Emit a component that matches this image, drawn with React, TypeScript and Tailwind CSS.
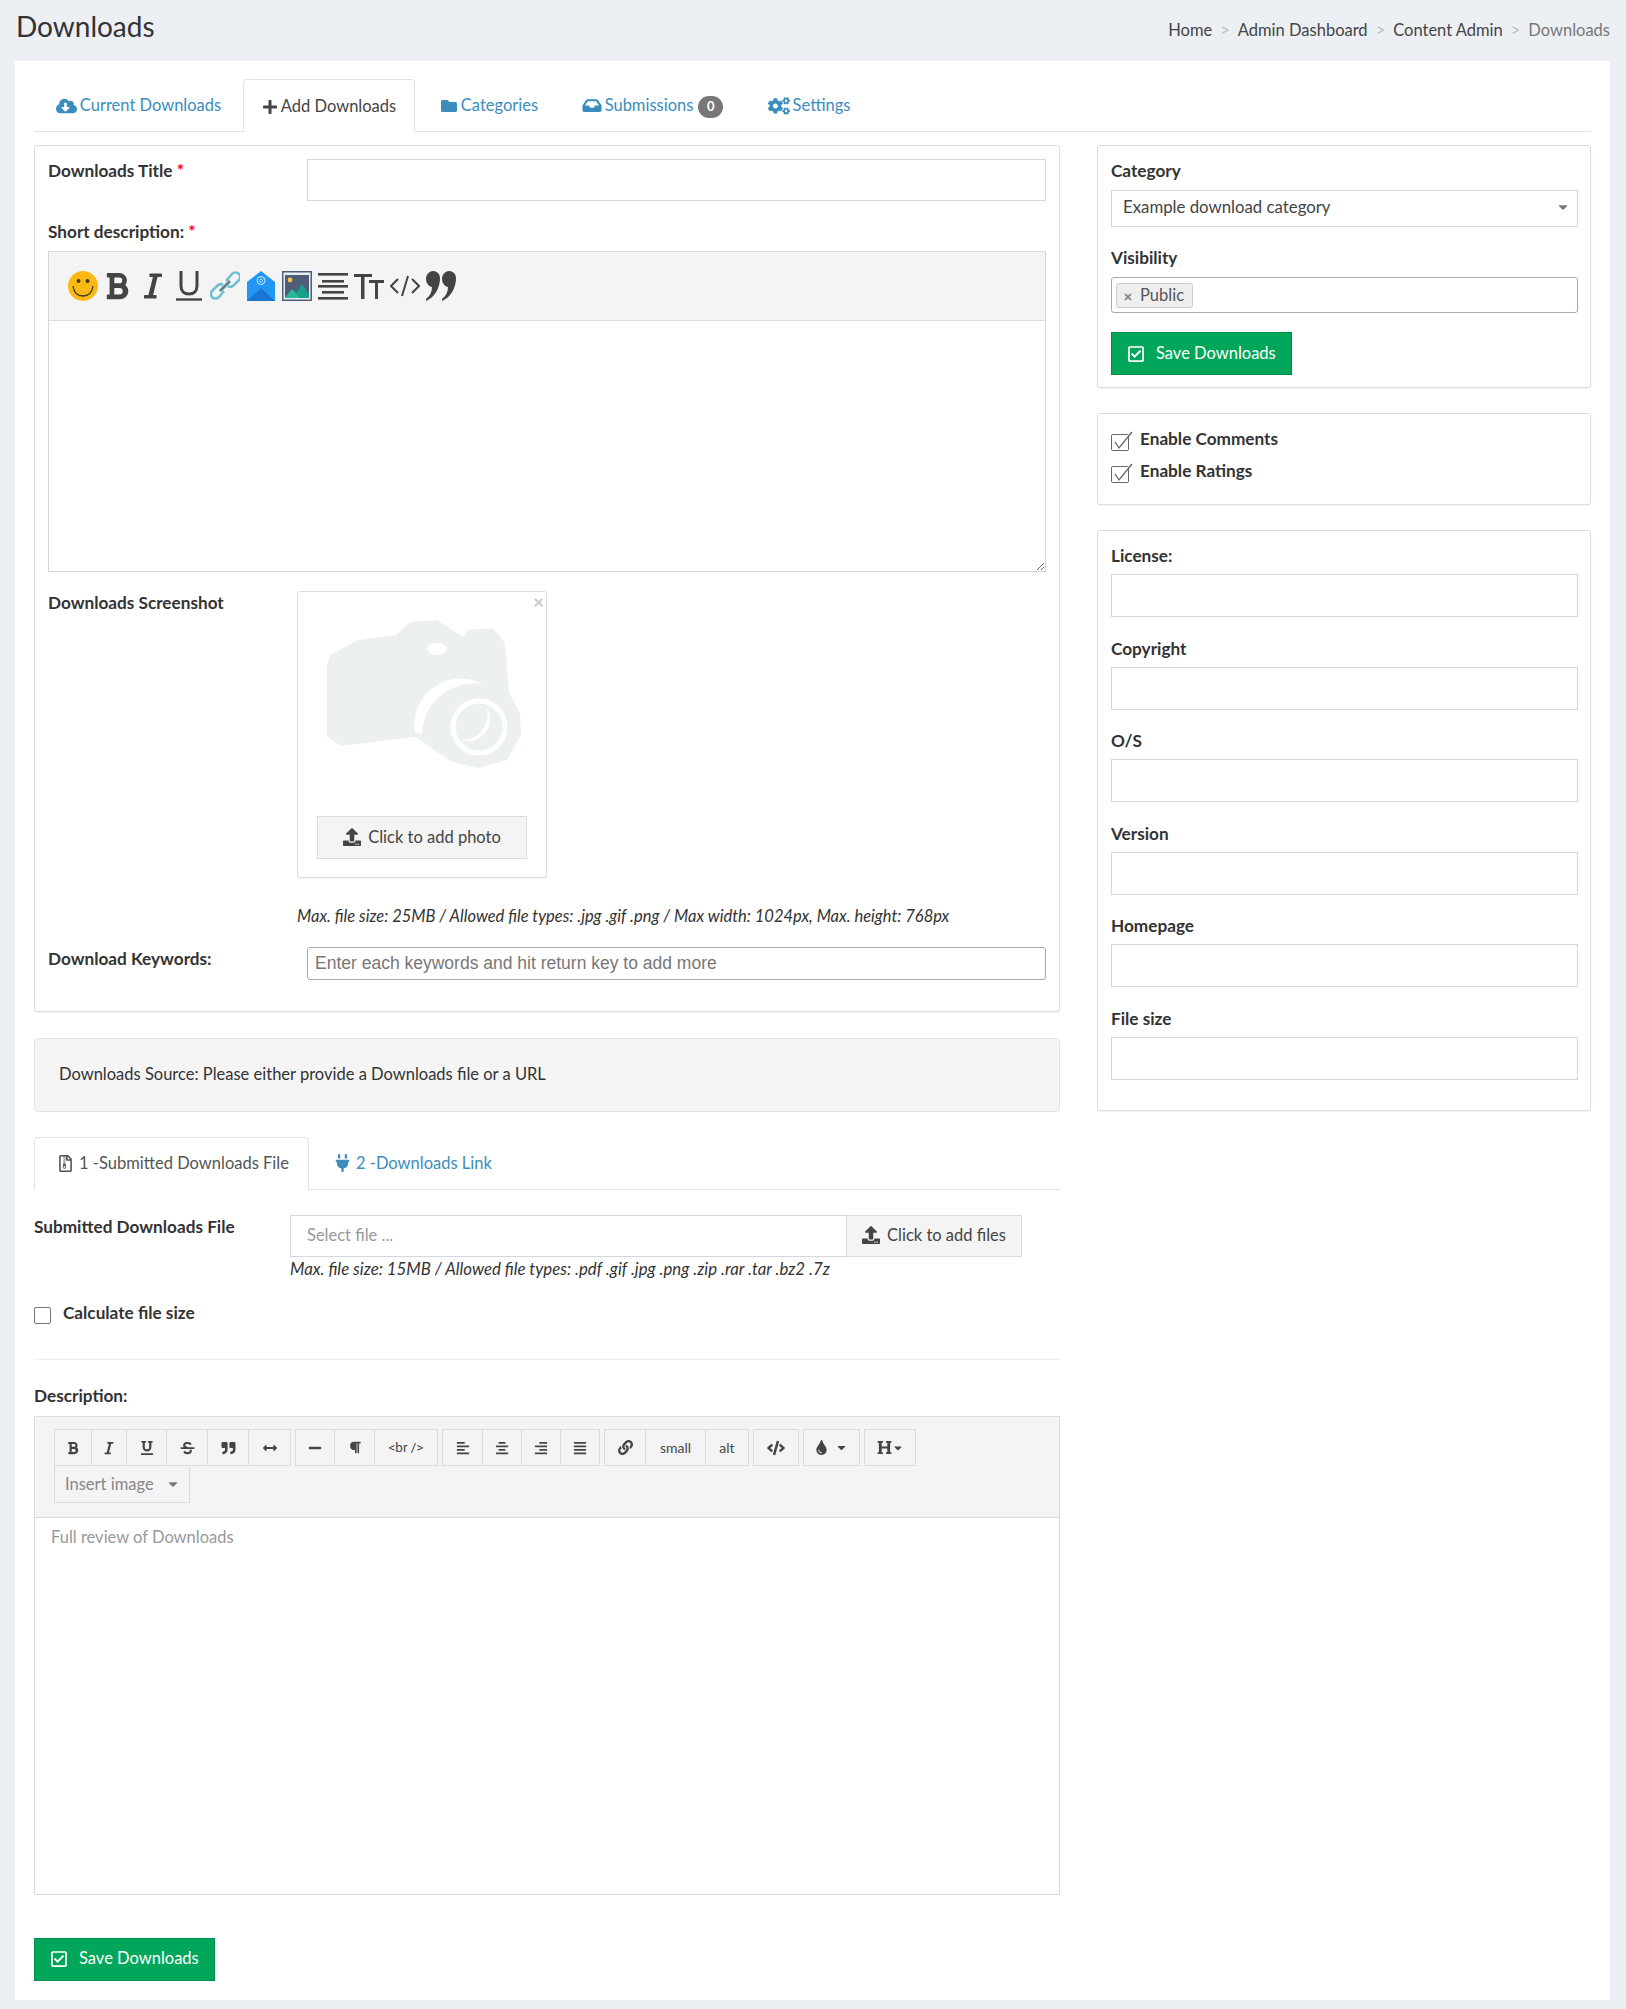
import type { ReactNode } from "react";
import {
  FaAlignCenter,
  FaAlignJustify,
  FaAlignLeft,
  FaAlignRight,
  FaArrowsAltH,
  FaBold,
  FaCaretDown,
  FaCloudDownloadAlt,
  FaCode,
  FaCogs,
  FaFolder,
  FaHeading,
  FaInbox,
  FaItalic,
  FaLink,
  FaMinus,
  FaParagraph,
  FaPlug,
  FaPlus,
  FaQuoteRight,
  FaRegCheckSquare,
  FaRegFileArchive,
  FaStrikethrough,
  FaTimes,
  FaTint,
  FaUnderline,
  FaUpload,
} from "react-icons/fa";

const panel = "border border-[#d9dde4] rounded-[3px] shadow-[0_1px_1px_rgba(0,0,0,0.05)] bg-white";
const field = "block border border-[#d2d6de] bg-white outline-none";
const tool = "flex items-center justify-center border border-[#dcdcdc] -ml-px first:ml-0 h-[37px] text-[#444]";

function Smiley() {
  return (
    <svg width="30" height="30" viewBox="0 0 30 30">
      <circle cx="15" cy="15" r="15" fill="#fdb913" />
      <circle cx="10.5" cy="10" r="2" fill="#3f3a2c" />
      <circle cx="19.5" cy="10" r="2" fill="#3f3a2c" />
      <path d="M5 15c1 7 5 10 10 10s9-3 10-10" fill="none" stroke="#3f3a2c" strokeWidth="1.3" />
    </svg>
  );
}

function ThinUnderline() {
  return (
    <svg width="26" height="30" viewBox="0 0 26 30" fill="none" stroke="#444">
      <path d="M5 0v15c0 5 3 8 8 8s8-3 8-8V0" strokeWidth="3" />
      <path d="M0 28.5h26" strokeWidth="2.4" />
    </svg>
  );
}

function ChainLink() {
  return (
    <svg width="30" height="30" viewBox="0 0 30 30" fill="none">
      <path d="M14 20l-5 6c-2 2-5 2-7 0s-1-5 0-6l6-6c2-1 4-1 5 0" stroke="#72c0d4" strokeWidth="2.6" />
      <path d="M16 10l6-7c2-2 5-2 7 0s1 5 0 6l-6 6c-2 1-4 1-5 0" stroke="#72c0d4" strokeWidth="2.6" />
      <path d="M10 20L20 10" stroke="#5f8792" strokeWidth="3" />
    </svg>
  );
}

function MailOpen() {
  return (
    <svg width="28" height="30" viewBox="0 0 28 30">
      <path d="M0 11L14 0l14 11v19H0z" fill="#2196f3" />
      <path d="M0 30L14 17l14 13z" fill="#1976d2" />
      <circle cx="14" cy="9.5" r="4" fill="none" stroke="#d5ecff" strokeWidth="1" />
      <circle cx="14" cy="9.5" r="1.5" fill="none" stroke="#d5ecff" strokeWidth="0.8" />
    </svg>
  );
}

function Picture() {
  return (
    <svg width="30" height="30" viewBox="0 0 30 30">
      <rect x="0" y="0" width="30" height="30" fill="#4f5d78" />
      <rect x="1.5" y="1.5" width="27" height="27" fill="#e8edf2" />
      <rect x="3" y="4" width="24" height="23" fill="#4f5d78" />
      <circle cx="8" cy="9" r="2.4" fill="#f5c542" />
      <path d="M3 27l7-9 4 4 6-9 7 10v4z" fill="#16a085" />
      <path d="M3 27l7-9 8 9z" fill="#26b99a" />
    </svg>
  );
}

function AlignBars() {
  return (
    <svg width="30" height="30" viewBox="0 0 30 30" fill="#444">
      <rect x="0" y="2" width="30" height="2.6" />
      <rect x="4" y="9" width="22" height="2.6" />
      <rect x="0" y="14" width="30" height="2.6" />
      <rect x="4" y="20" width="22" height="2.6" />
      <rect x="0" y="26" width="30" height="2.6" />
    </svg>
  );
}

function TextSize() {
  return (
    <svg width="30" height="30" viewBox="0 0 30 30" fill="#444">
      <rect x="0" y="3" width="18" height="3" />
      <rect x="7" y="3" width="3.5" height="25" />
      <rect x="15" y="9" width="15" height="3" />
      <rect x="21" y="9" width="3" height="19" />
    </svg>
  );
}

function ThinCode() {
  return (
    <svg width="30" height="22" viewBox="0 0 30 22" fill="none" stroke="#444" strokeWidth="2">
      <path d="M8 4L1 11l7 7M22 4l7 7-7 7M18 1l-6 20" />
    </svg>
  );
}

function CurlyQuote() {
  return (
    <svg width="30" height="30" viewBox="0 0 30 30" fill="#444">
      <path d="M7 0c4 0 7 3 7 7 0 10-5 19-14 23v-2c4-3 6-7 6-12C3 16 0 12 0 8s3-8 7-8z" />
      <path d="M23 0c4 0 7 3 7 7 0 10-5 19-14 23v-2c4-3 6-7 6-12-3 0-6-4-6-8s3-8 7-8z" />
    </svg>
  );
}

function Camera() {
  return (
    <svg width="194" height="148" viewBox="0 0 194 148">
      <path
        d="M0 47L3 35 31 20 69 15 83 2 110 0 136 17 141 10 166 8 178 23 182 73 193 93 194 115 180 140 152 148 125 142 88 117 14 126 0 117z"
        fill="#ecf0f1"
      />
      <path d="M88 112a46 46 0 0 1 67-48 52 52 0 0 0-60 50z" fill="#fff" />
      <ellipse cx="110" cy="29" rx="10" ry="6" fill="#fff" />
      <circle cx="152" cy="107" r="26" fill="none" stroke="#fff" strokeWidth="5" />
      <path d="M160 88a22 22 0 0 1-26 32 26 26 0 0 0 26-32z" fill="#fff" />
    </svg>
  );
}

function Tab({ icon, label, active, width, badge }: { icon: ReactNode; label: string; active?: boolean; width: string; badge?: string }) {
  return (
    <div
      className={
        width +
        " flex items-center justify-center gap-[3px] pt-[1px] " +
        (active
          ? "border border-b-0 border-[#dfe3ea] rounded-t-[4px] bg-white text-[#444] -mb-px h-[53px]"
          : "text-[#3c8dbc] h-[52px]")
      }
    >
      {icon}
      <span>{label}</span>
      {badge && (
        <span className="ml-[2px] mt-[2px] flex items-center justify-center w-[25px] h-[22px] rounded-full bg-[#777] text-white text-[13px] font-bold">
          {badge}
        </span>
      )}
    </div>
  );
}

function Label({ children, className = "" }: { children: ReactNode; className?: string }) {
  return <div className={"h-[22px] leading-[22px] font-bold text-[17.2px] text-[#333] whitespace-nowrap " + className}>{children}</div>;
}

function SaveButton({ className = "pb-[2px]" }: { className?: string }) {
  return (
    <div className={"flex items-center w-[181px] h-[43px] pl-[15px] bg-[#00a65a] border border-[#008d4c] text-white " + className}>
      <FaRegCheckSquare className="w-[18px] h-[18px] mr-[11px]" />
      Save Downloads
    </div>
  );
}

function SideField({ label, first }: { label: string; first?: boolean }) {
  return (
    <div className={first ? "" : "mt-[20.5px]"}>
      <Label>{label}</Label>
      <input type="text" className={field + " w-full h-[43px] mt-[7px]"} />
    </div>
  );
}

function CheckRow({ label }: { label: string }) {
  return (
    <div className="flex items-start h-[32px]">
      <svg width="22" height="20" viewBox="0 0 22 20" fill="none" className="mr-[7px] mt-[3px]">
        <rect x="0.5" y="3.5" width="17" height="16" rx="1" stroke="#666" />
        <path d="M4 11l4 6L21 1" stroke="#666" strokeWidth="1.3" />
      </svg>
      <span className="font-bold text-[17.2px] text-[#333] leading-[22px]">{label}</span>
    </div>
  );
}

function Caret() {
  return <FaCaretDown className="w-[14px] h-[14px] text-[#777]" />;
}

const toolGroups: { w: string; node: ReactNode }[][] = [
  [
    { w: "w-[38px]", node: <FaBold className="w-[14px] h-[14px]" /> },
    { w: "w-[36px]", node: <FaItalic className="w-[12px] h-[14px]" /> },
    { w: "w-[41px]", node: <FaUnderline className="w-[14px] h-[14px]" /> },
    { w: "w-[42px]", node: <FaStrikethrough className="w-[15px] h-[14px]" /> },
    { w: "w-[42px]", node: <FaQuoteRight className="w-[15px] h-[14px]" /> },
    { w: "w-[43px]", node: <FaArrowsAltH className="w-[16px] h-[14px]" /> },
  ],
  [
    { w: "w-[40px]", node: <FaMinus className="w-[14px] h-[14px]" /> },
    { w: "w-[41px]", node: <FaParagraph className="w-[12px] h-[13px]" /> },
    { w: "w-[64px]", node: <span className="text-[13.5px] font-['Roboto',sans-serif]">&lt;br /&gt;</span> },
  ],
  [
    { w: "w-[41px]", node: <FaAlignLeft className="w-[14px] h-[14px]" /> },
    { w: "w-[40px]", node: <FaAlignCenter className="w-[14px] h-[14px]" /> },
    { w: "w-[40px]", node: <FaAlignRight className="w-[14px] h-[14px]" /> },
    { w: "w-[40px]", node: <FaAlignJustify className="w-[14px] h-[14px]" /> },
  ],
  [
    { w: "w-[42px]", node: <FaLink className="w-[15px] h-[15px]" /> },
    { w: "w-[61px]", node: <span className="text-[14px]">small</span> },
    { w: "w-[44px]", node: <span className="text-[14px]">alt</span> },
  ],
  [{ w: "w-[46px]", node: <FaCode className="w-[18px] h-[16px]" /> }],
  [
    {
      w: "w-[57px] gap-[7px]",
      node: (
        <>
          <FaTint className="w-[13px] h-[15px]" />
          <FaCaretDown className="w-[13px] h-[13px]" />
        </>
      ),
    },
  ],
  [
    {
      w: "w-[52px]",
      node: (
        <>
          <FaHeading className="w-[15px] h-[15px]" />
          <FaCaretDown className="w-[12px] h-[12px]" />
        </>
      ),
    },
  ],
];

const shortIcons: ReactNode[] = [
  <FaBold className="w-[24px] h-[30px] text-[#444]" />,
  <FaItalic className="w-[18px] h-[30px] text-[#444]" />,
  <ThinUnderline />,
  <ChainLink />,
  <MailOpen />,
  <Picture />,
  <AlignBars />,
  <TextSize />,
  <ThinCode />,
  <CurlyQuote />,
];

export default function App() {
  return (
    <div className="min-h-screen bg-[#ecf0f5] pb-[10px] font-['Lato',sans-serif] text-[16.5px] text-[#333]">
      {/* Page header */}
      <div className="flex justify-between items-center h-[61px] pl-[16px] pr-[16px]">
        <h1 className="text-[28px] font-normal leading-none -mt-[10px]">Downloads</h1>
        <div className="flex items-center text-[#444] mt-[-1px]">
          <span>Home</span>
          <span className="text-[#bbb] mx-[8px]">&gt;</span>
          <span>Admin Dashboard</span>
          <span className="text-[#bbb] mx-[8px]">&gt;</span>
          <span>Content Admin</span>
          <span className="text-[#bbb] mx-[8px]">&gt;</span>
          <span className="text-[#777]">Downloads</span>
        </div>
      </div>

      <div className="ml-[15px] mr-[16px] bg-white px-[19px] pt-[19px] pb-[19px]">
        {/* Top tabs */}
        <div className="flex items-end border-b border-[#dfe3ea] h-[52px]">
          <Tab width="w-[209px]" icon={<FaCloudDownloadAlt className="w-[21px] h-[18px]" />} label="Current Downloads" />
          <Tab width="w-[172px]" active icon={<FaPlus className="w-[16px] h-[16px]" />} label="Add Downloads" />
          <div className="w-[4px]" />
          <Tab width="w-[140px]" icon={<FaFolder className="w-[18px] h-[16px]" />} label="Categories" />
          <Tab width="w-[187px]" icon={<FaInbox className="w-[20px] h-[17px]" />} label="Submissions" badge="0" />
          <Tab width="w-[126px]" icon={<FaCogs className="w-[22px] h-[18px]" />} label="Settings" />
        </div>

        <div className="flex mt-[13px]">
          {/* Left column */}
          <div className="w-[1026px]">
            <div className={panel + " pl-[13px] pr-[13px] pt-[13px] pb-[31px]"}>
              <div className="flex">
                <Label className="w-[259px] mt-[1px]">
                  Downloads Title <span className="text-[#ff0000]">*</span>
                </Label>
                <input type="text" className={field + " h-[42px] flex-1"} />
              </div>

              <Label className="mt-[20px]">
                Short description: <span className="text-[#ff0000]">*</span>
              </Label>
              <div className="mt-[8px] border border-[#d2d6de] h-[321px]">
                <div className="flex items-center h-[69px] pl-[18px] bg-[#f4f4f4] border-b border-[#dcdcdc]">
                  <div className="w-[32px] flex justify-center"><Smiley /></div>
                  {shortIcons.map((icon, i) => (
                    <div key={i} className="w-[36px] flex justify-center">{icon}</div>
                  ))}
                </div>
                <textarea className="block w-full h-[250px] resize-y outline-none" />
              </div>

              <div className="flex mt-[19px]">
                <Label className="w-[249px] mt-[1px]">Downloads Screenshot</Label>
                <div className={panel + " relative w-[250px] h-[287px] pt-[28px]"}>
                  <span className="absolute top-[-2px] right-[2px] text-[#c8c8c8] text-[19px] font-bold leading-[24px]">×</span>
                  <div className="pl-[29px]"><Camera /></div>
                  <div className="mx-[19px] mt-[48px] h-[43px] pb-[1px] flex items-center justify-center gap-[7px] bg-[#f4f4f4] border border-[#dcdcdc] text-[#444]">
                    <FaUpload className="w-[18px] h-[18px]" />
                    Click to add photo
                  </div>
                </div>
              </div>
              <div className="ml-[249px] mt-[27px] h-[22px] leading-[22px] italic whitespace-nowrap">
                Max. file size: 25MB / Allowed file types: .jpg .gif .png / Max width: 1024px, Max. height: 768px
              </div>

              <div className="flex mt-[20px]">
                <Label className="w-[259px] mt-[1px]">Download Keywords:</Label>
                <input
                  type="text"
                  placeholder="Enter each keywords and hit return key to add more"
                  className="flex-1 h-[33px] px-[7px] pb-[1px] border border-[#aaa] rounded-[3px] outline-none text-[17.5px] font-['Liberation_Sans',sans-serif] placeholder:text-[#777]"
                />
              </div>
            </div>

            <div className="mt-[26px] h-[74px] flex items-center pl-[24px] pb-[2px] bg-[#f5f5f5] border border-[#e3e3e3] rounded-[4px]">
              Downloads Source: Please either provide a Downloads file or a URL
            </div>

            {/* File or link tabs */}
            <div className="flex items-end mt-[26px] h-[52px] border-b border-[#dfe3ea]">
              <div className="w-[275px] h-[53px] -mb-px pb-[2px] pl-[4px] flex items-center justify-center gap-[6px] border border-b-0 border-[#dfe3ea] rounded-t-[4px] bg-white text-[#555]">
                <FaRegFileArchive className="w-[15px] h-[17px]" />
                1 -Submitted Downloads File
              </div>
              <div className="h-[52px] ml-[26px] flex items-center gap-[6px] text-[#3c8dbc]">
                <FaPlug className="w-[15px] h-[18px]" />
                2 -Downloads Link
              </div>
            </div>

            <div className="flex mt-[25px]">
              <Label className="w-[256px] shrink-0 mt-[1px]">Submitted Downloads File</Label>
              <input type="text" placeholder="Select file ..." className={field + " w-[557px] shrink-0 h-[42px] pl-[16px] pb-[3px] placeholder:text-[#999]"} />
              <div className="w-[176px] shrink-0 h-[42px] -ml-px pb-[2px] flex items-center justify-center gap-[7px] bg-[#f4f4f4] border border-[#dcdcdc] text-[#444] whitespace-nowrap">
                <FaUpload className="w-[18px] h-[18px]" />
                Click to add files
              </div>
            </div>
            <div className="ml-[256px] mt-[1px] h-[22px] leading-[22px] italic text-[16.8px] whitespace-nowrap">
              Max. file size: 15MB / Allowed file types: .pdf .gif .jpg .png .zip .rar .tar .bz2 .7z
            </div>

            <div className="flex mt-[27px]">
              <input type="checkbox" className="appearance-none w-[17px] h-[17px] border border-[#777] rounded-[2px] bg-white" />
              <Label className="ml-[12px] -mt-[5px]">Calculate file size</Label>
            </div>

            <div className="mt-[35px] border-t border-[#eee]" />

            <Label className="mt-[25px]">Description:</Label>
            <div className="mt-[9px] border border-[#dcdcdc] h-[479px]">
              <div className="h-[101px] bg-[#f4f4f4] border-b border-[#dcdcdc] pl-[19px] pt-[12px]">
                <div className="flex gap-[4px]">
                  {toolGroups.map((group, i) => (
                    <div key={i} className="flex">
                      {group.map((item, j) => (
                        <div key={j} className={tool + " " + item.w}>
                          {item.node}
                        </div>
                      ))}
                    </div>
                  ))}
                </div>
                <div className="flex items-center justify-between w-[136px] h-[38px] -mt-px pl-[10px] pr-[9px] border border-[#dcdcdc] text-[#888]">
                  Insert image
                  <Caret />
                </div>
              </div>
              <div className="pl-[16px] pt-[7px] text-[#999]">Full review of Downloads</div>
            </div>

            <div className="mt-[43px]">
              <SaveButton />
            </div>
          </div>

          {/* Right column */}
          <div className="w-[494px] ml-[37px] self-start">
            <div className={panel + " pl-[13px] pr-[12px] pt-[14px] pb-[12px]"}>
              <Label>Category</Label>
              <div className="flex items-center justify-between mt-[8px] h-[37px] pl-[11px] pr-[7px] pb-[3px] border border-[#d2d6de] text-[#444] text-[16.8px]">
                Example download category
                <Caret />
              </div>
              <Label className="mt-[20px]">Visibility</Label>
              <div className="flex items-center mt-[8px] h-[36px] pl-[4px] border border-[#aaa] rounded-[3px]">
                <div className="flex items-center h-[25px] w-[77px] pl-[6px] border border-[#ccc] rounded-[3px] bg-[#eee] text-[#555]">
                  <FaTimes className="w-[10px] h-[10px] text-[#888] mr-[7px] mt-[3px]" />
                  Public
                </div>
              </div>
              <div className="mt-[19px]">
                <SaveButton className="pb-0" />
              </div>
            </div>

            <div className={panel + " mt-[25px] h-[92px] pl-[13px] pr-[12px] pt-[14px]"}>
              <CheckRow label="Enable Comments" />
              <CheckRow label="Enable Ratings" />
            </div>

            <div className={panel + " mt-[25px] h-[581px] pl-[13px] pr-[12px] pt-[14px]"}>
              <SideField first label="License:" />
              <SideField label="Copyright" />
              <SideField label="O/S" />
              <SideField label="Version" />
              <SideField label="Homepage" />
              <SideField label="File size" />
            </div>
          </div>
        </div>
      </div>
    </div>
  );
}
